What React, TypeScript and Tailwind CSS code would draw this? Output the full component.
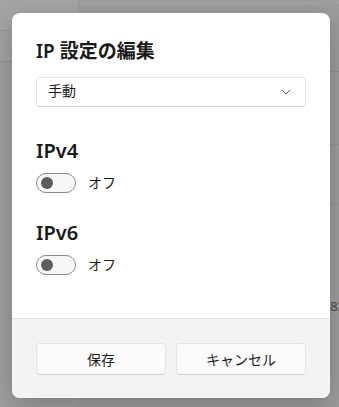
import React from "react";

const font = {
  fontFamily: '"Noto Sans", "Noto Sans CJK JP", sans-serif',
};

function Toggle() {
  return (
    <div className="flex items-center gap-3">
      <div className="w-[40px] h-[20px] rounded-full border border-[#8a8a8a] bg-[#f7f7f7] flex items-center px-[4px]">
        <div className="w-[12px] h-[12px] rounded-full bg-[#5d5d5d]" />
      </div>
      <span className="text-[14px] text-[#1b1b1b] leading-[20px]">オフ</span>
    </div>
  );
}

export default function App() {
  return (
    <div
      className="relative w-[339px] h-[407px] overflow-hidden bg-[#9e9e9e]"
      style={font}
    >
      {/* dimmed settings window behind */}
      <div className="flex h-full">
        <div className="w-[78px] flex flex-col bg-[#a1a2a3]">
          <div className="h-[31px] bg-[#a4a4a5] border-b border-[#939393]" />
          <div className="h-[31px] border-b border-[#8f8f8f]" />
          <div className="flex-1 bg-[#9f9f9f]" />
        </div>
        <div className="flex-1 flex flex-col pt-[3px] border-l border-[#959595]">
          <div className="flex-1 rounded-tl-[6px] bg-[#9c9c9c] border-t border-l border-[#a3a3a3] flex flex-col">
            <div className="h-[67px]" />
            <div className="h-[73px] border-t border-[#8f8f8f]" />
            <div className="h-[60px] border-t border-[#939393]" />
            <div className="h-[104px] border-t border-[#939393] flex items-end justify-end">
              <span className="text-[13px] text-[#4a4a4a] mr-[-6px] mb-[-8px]">82</span>
            </div>
          </div>
        </div>
      </div>

      {/* dialog */}
      <div className="absolute left-[12px] top-[13px] w-[318px] h-[385px] rounded-[8px] bg-white overflow-hidden flex flex-col shadow-[0_8px_24px_rgba(0,0,0,0.22)]">
        <div className="flex-1 px-6 pt-6">
          <h2 className="text-[19px] leading-[28px] font-semibold text-[#1a1a1a]">
            IP 設定の編集
          </h2>
          <div className="mt-3 h-[30px] rounded-[4px] border border-[#e5e5e5] border-b-[#d6d6d6] bg-white flex items-center justify-between pl-[11px] pr-[14px]">
            <span className="text-[14px] leading-[20px] text-[#1b1b1b] -mt-[2px]">手動</span>
            <svg width="10" height="6" viewBox="0 0 10 6" fill="none">
              <path d="M1 1l4 4 4-4" stroke="#5a5a5a" strokeWidth="1" />
            </svg>
          </div>

          <h3 className="mt-[30px] text-[20px] leading-[28px] font-semibold text-[#1a1a1a]">
            IPv4
          </h3>
          <div className="mt-[8px]">
            <Toggle />
          </div>

          <h3 className="mt-[26px] text-[20px] leading-[28px] font-semibold text-[#1a1a1a]">
            IPv6
          </h3>
          <div className="mt-[8px]">
            <Toggle />
          </div>
        </div>

        <div className="h-[80px] bg-[#f3f3f3] border-t border-[#e5e5e5] px-6 pt-6 flex gap-[10px]">
          <button className="flex-1 h-[32px] rounded-[4px] bg-[#fbfbfb] border border-[#e3e3e3] border-b-[#cfcfcf] text-[14px] text-[#1b1b1b]">
            保存
          </button>
          <button className="flex-1 h-[32px] rounded-[4px] bg-[#fbfbfb] border border-[#e3e3e3] border-b-[#cfcfcf] text-[14px] text-[#1b1b1b]">
            キャンセル
          </button>
        </div>
      </div>
    </div>
  );
}
